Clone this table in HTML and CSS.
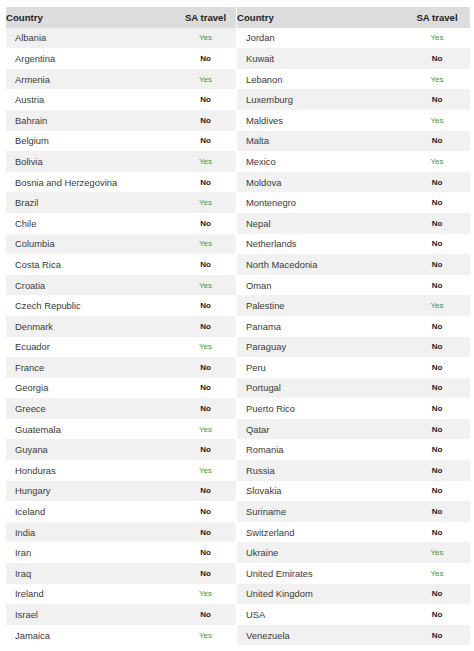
FILE: index.html
```html
<!DOCTYPE html>
<html>
<head>
<meta charset="utf-8">
<title>SA travel</title>
<link rel="stylesheet" href="styles.css">
</head>
<body>
<div class="wrap">
  <table class="tbl tbl-left">
    <colgroup><col class="c-name"><col class="c-val"></colgroup>
    <thead><tr><th class="h-name">Country</th><th class="h-val">SA travel</th></tr></thead>
    <tbody>
      <tr><td>Albania</td><td class="yes">Yes</td></tr>
      <tr><td>Argentina</td><td class="no">No</td></tr>
      <tr><td>Armenia</td><td class="yes">Yes</td></tr>
      <tr><td>Austria</td><td class="no">No</td></tr>
      <tr><td>Bahrain</td><td class="no">No</td></tr>
      <tr><td>Belgium</td><td class="no">No</td></tr>
      <tr><td>Bolivia</td><td class="yes">Yes</td></tr>
      <tr><td>Bosnia and Herzegovina</td><td class="no">No</td></tr>
      <tr><td>Brazil</td><td class="yes">Yes</td></tr>
      <tr><td>Chile</td><td class="no">No</td></tr>
      <tr><td>Columbia</td><td class="yes">Yes</td></tr>
      <tr><td>Costa Rica</td><td class="no">No</td></tr>
      <tr><td>Croatia</td><td class="yes">Yes</td></tr>
      <tr><td>Czech Republic</td><td class="no">No</td></tr>
      <tr><td>Denmark</td><td class="no">No</td></tr>
      <tr><td>Ecuador</td><td class="yes">Yes</td></tr>
      <tr><td>France</td><td class="no">No</td></tr>
      <tr><td>Georgia</td><td class="no">No</td></tr>
      <tr><td>Greece</td><td class="no">No</td></tr>
      <tr><td>Guatemala</td><td class="yes">Yes</td></tr>
      <tr><td>Guyana</td><td class="no">No</td></tr>
      <tr><td>Honduras</td><td class="yes">Yes</td></tr>
      <tr><td>Hungary</td><td class="no">No</td></tr>
      <tr><td>Iceland</td><td class="no">No</td></tr>
      <tr><td>India</td><td class="no">No</td></tr>
      <tr><td>Iran</td><td class="no">No</td></tr>
      <tr><td>Iraq</td><td class="no">No</td></tr>
      <tr><td>Ireland</td><td class="yes">Yes</td></tr>
      <tr><td>Israel</td><td class="no">No</td></tr>
      <tr><td>Jamaica</td><td class="yes">Yes</td></tr>
    </tbody>
  </table>
  <table class="tbl tbl-right">
    <colgroup><col class="c-name"><col class="c-val"></colgroup>
    <thead><tr><th class="h-name">Country</th><th class="h-val">SA travel</th></tr></thead>
    <tbody>
      <tr><td>Jordan</td><td class="yes">Yes</td></tr>
      <tr><td>Kuwait</td><td class="no">No</td></tr>
      <tr><td>Lebanon</td><td class="yes">Yes</td></tr>
      <tr><td>Luxemburg</td><td class="no">No</td></tr>
      <tr><td>Maldives</td><td class="yes">Yes</td></tr>
      <tr><td>Malta</td><td class="no">No</td></tr>
      <tr><td>Mexico</td><td class="yes">Yes</td></tr>
      <tr><td>Moldova</td><td class="no">No</td></tr>
      <tr><td>Montenegro</td><td class="no">No</td></tr>
      <tr><td>Nepal</td><td class="no">No</td></tr>
      <tr><td>Netherlands</td><td class="no">No</td></tr>
      <tr><td>North Macedonia</td><td class="no">No</td></tr>
      <tr><td>Oman</td><td class="no">No</td></tr>
      <tr><td>Palestine</td><td class="yes">Yes</td></tr>
      <tr><td>Panama</td><td class="no">No</td></tr>
      <tr><td>Paraguay</td><td class="no">No</td></tr>
      <tr><td>Peru</td><td class="no">No</td></tr>
      <tr><td>Portugal</td><td class="no">No</td></tr>
      <tr><td>Puerto Rico</td><td class="no">No</td></tr>
      <tr><td>Qatar</td><td class="no">No</td></tr>
      <tr><td>Romania</td><td class="no">No</td></tr>
      <tr><td>Russia</td><td class="no">No</td></tr>
      <tr><td>Slovakia</td><td class="no">No</td></tr>
      <tr><td>Suriname</td><td class="no">No</td></tr>
      <tr><td>Switzerland</td><td class="no">No</td></tr>
      <tr><td>Ukraine</td><td class="yes">Yes</td></tr>
      <tr><td>United Emirates</td><td class="yes">Yes</td></tr>
      <tr><td>United Kingdom</td><td class="no">No</td></tr>
      <tr><td>USA</td><td class="no">No</td></tr>
      <tr><td>Venezuela</td><td class="no">No</td></tr>
    </tbody>
  </table>
</div>
</body>
</html>
```
FILE: styles.css
```css
html, body {
  margin: 0;
  padding: 0;
  background: #ffffff;
}
body {
  font-family: "Liberation Sans", Arial, sans-serif;
  color: #333333;
}
.wrap {
  display: flex;
  gap: 1px;
  padding: 7px 0 0 6px;
}
.tbl {
  border-collapse: collapse;
  table-layout: fixed;
}
.tbl-left { width: 230px; }
.tbl-right { width: 233px; }
.tbl-left .c-val { width: 61px; }
.tbl-right .c-val { width: 66px; }
.tbl tr { height: 20.6px; }
.tbl th, .tbl td {
  padding: 0;
  vertical-align: middle;
  white-space: nowrap;
  overflow: hidden;
}
.tbl thead tr { background: #dcdcdc; }
.tbl th {
  font-size: 9.6px;
  font-weight: bold;
  color: #222222;
}
.h-name { text-align: left; padding-left: 9px; }
.h-val { text-align: center; }
.tbl td {
  font-size: 9.4px;
  color: #3a3a3a;
  padding-left: 9px;
}
.tbl td.yes, .tbl td.no {
  padding-left: 0;
  text-align: center;
  font-size: 8px;
}
.tbl td.yes { color: #3b9a33; }
.tbl td.no { color: #222222; font-weight: bold; }
.tbl-left tbody tr:nth-child(odd) { background: #f1f1f1; }
.tbl-right tbody tr:nth-child(even) { background: #f1f1f1; }
```
